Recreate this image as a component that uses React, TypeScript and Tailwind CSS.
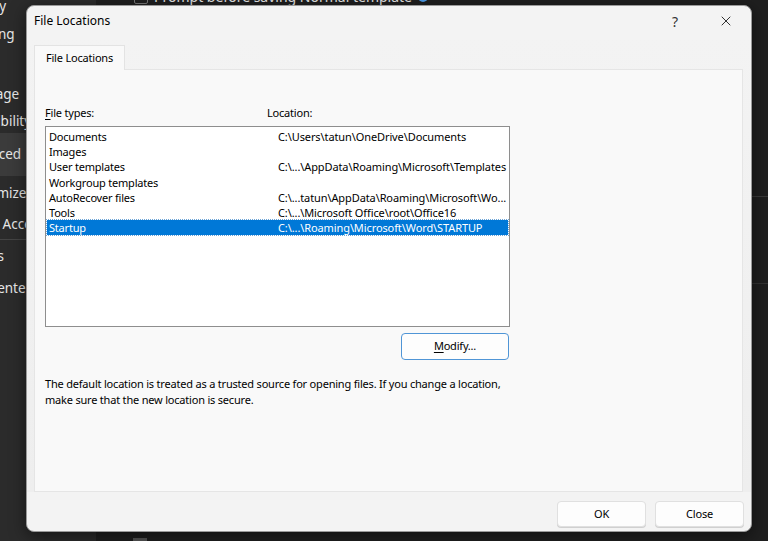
import { X } from "lucide-react";

const rows = [
  { type: "Documents", loc: "C:\\Users\\tatun\\OneDrive\\Documents" },
  { type: "Images", loc: "" },
  { type: "User templates", loc: "C:\\...\\AppData\\Roaming\\Microsoft\\Templates" },
  { type: "Workgroup templates", loc: "" },
  { type: "AutoRecover files", loc: "C:\\...tatun\\AppData\\Roaming\\Microsoft\\Wo..." },
  { type: "Tools", loc: "C:\\...\\Microsoft Office\\root\\Office16" },
  { type: "Startup", loc: "C:\\...\\Roaming\\Microsoft\\Word\\STARTUP" },
];

// Word Options nav, mostly hidden behind the dialog
const navTop = [
  { label: "Display", h: "h-[28px]", ml: "-ml-[40px]" },
  { label: "Proofing", h: "h-[29px]", ml: "-ml-[40px]" },
  { label: "Save", h: "h-[30px]", ml: "-ml-[40px]" },
  { label: "Language", h: "h-[30px]", ml: "-ml-[44px]" },
  { label: "Accessibility", h: "h-[24px]", ml: "-ml-[45px]" },
];

export default function App() {
  return (
    <div className="relative w-[768px] h-[541px] overflow-hidden bg-[#1f1f1f] font-['Noto_Sans',sans-serif] text-[11px] tracking-[-0.2px] text-black">
      {/* Word options behind the dialog */}
      <div className="flex h-full">
        <div className="w-[96px] h-full bg-[#2b2b2b] text-[#e6e6e6] text-[13.5px] tracking-normal flex flex-col overflow-hidden whitespace-nowrap">
          <div className="flex flex-col -mt-[8px]">
            {navTop.map((s, i) => (
              <div key={i} className={`${s.h} flex items-center`}>
                <span className={s.ml}>{s.label}</span>
              </div>
            ))}
          </div>
          <div className="h-[43px] shrink-0 bg-[#3b3b3b] flex items-center">
            <span className="-ml-[41px]">Advanced</span>
          </div>
          <div className="h-[34px] shrink-0 flex items-center">
            <span className="-ml-[40px]">Customize Ribbon</span>
          </div>
          <div className="h-[30px] shrink-0 flex items-center border-b border-[#444]">
            <span className="-ml-[37px]">Quick Access Toolbar</span>
          </div>
          <div className="h-[32px] shrink-0 flex items-center">
            <span className="-ml-[44px]">Add-ins</span>
          </div>
          <div className="h-[32px] shrink-0 flex items-center">
            <span className="-ml-[47px]">Trust Center</span>
          </div>
        </div>
        <div className="flex-1 relative">
          <div className="flex items-center gap-[6px] -mt-[14px] ml-[38px] text-[#e6e6e6] text-[14px] tracking-normal">
            <div className="w-[14px] h-[14px] border border-[#777] rounded-[2px]" />
            <span>Prompt before saving Normal template</span>
            <span className="w-[10px] h-[10px] rounded-full bg-[#4c9be8]" />
          </div>
        </div>
      </div>
      <div className="absolute right-0 top-[196px] w-[17px] border-t border-[#3a3a3a]" />
      <div className="absolute right-0 top-[283px] w-[17px] border-t border-[#333]" />
      <div className="absolute left-[133px] bottom-0 w-[14px] h-[3px] bg-[#555]" />

      {/* Dialog */}
      <div className="absolute left-[26px] top-[5px] w-[726px] h-[527px] bg-[#f3f3f3] rounded-[8px] border border-[#9a9a9a] shadow-[0_4px_16px_rgba(0,0,0,0.5)] flex flex-col">
        <div className="h-[30px] flex items-center pl-[7px] shrink-0">
          <span className="text-[12px] tracking-normal flex-1">File Locations</span>
          <span className="w-[52px] text-center text-[14px] text-[#333]">?</span>
          <div className="w-[50px] flex justify-center">
            <X size={16} strokeWidth={1.2} />
          </div>
        </div>

        <div className="px-[7px] pt-[8px] flex flex-col bg-gradient-to-b from-[#f3f3f3] to-[#eeeeee]">
          <div className="flex">
            <div className="w-[91px] h-[25px] bg-[#f9f9f9] border border-b-0 border-[#e3e3e3] flex items-center justify-center relative top-[1px]">
              File Locations
            </div>
          </div>
          <div className="h-[423px] w-[709px] bg-[#f9f9f9] border border-[#e5e5e5] pl-[10px] pt-[35px] flex flex-col">
            <div className="flex h-[17px] items-center">
              <span className="w-[222px]">
                <span className="underline underline-offset-2">F</span>ile types:
              </span>
              <span>Location:</span>
            </div>
            <div className="mt-[4px] w-[465px] h-[201px] bg-white border border-[#8e8e8e] pt-[2px] pl-[1px] pr-[1px]">
              {rows.map((r, i) => {
                const sel = r.type === "Startup";
                return (
                  <div
                    key={i}
                    className={`flex h-[15.2px] items-center leading-none whitespace-nowrap ${sel ? "bg-[#0078d7] text-white outline-1 outline-dotted outline-[#6fa6d8]" : ""}`}
                  >
                    <span className="w-[231px] shrink-0 pl-[2px]">{r.type}</span>
                    <span className="tracking-[-0.1px]">{r.loc}</span>
                  </div>
                );
              })}
            </div>
            <div className="w-[465px] flex justify-end mt-[6px]">
              <button className="w-[108px] h-[27px] bg-[#fdfdfd] border border-[#4f95d6] rounded-[4px] mr-[1px]">
                <span className="underline underline-offset-2">M</span>odify...
              </button>
            </div>
            <p className="mt-[16px] leading-[16px] w-[470px]">
              The default location is treated as a trusted source for opening files. If you change a location, make sure that the new location is secure.
            </p>
          </div>
        </div>

        <div className="flex justify-end gap-[9px] pr-[7px] pt-[9px]">
          <button className="w-[89px] h-[26px] bg-[#fdfdfd] border border-[#e0e0e0] rounded-[4px] shadow-[0_1px_0_#d0d0d0]">OK</button>
          <button className="w-[89px] h-[26px] bg-[#fdfdfd] border border-[#e0e0e0] rounded-[4px] shadow-[0_1px_0_#d0d0d0]">Close</button>
        </div>
      </div>
    </div>
  );
}
